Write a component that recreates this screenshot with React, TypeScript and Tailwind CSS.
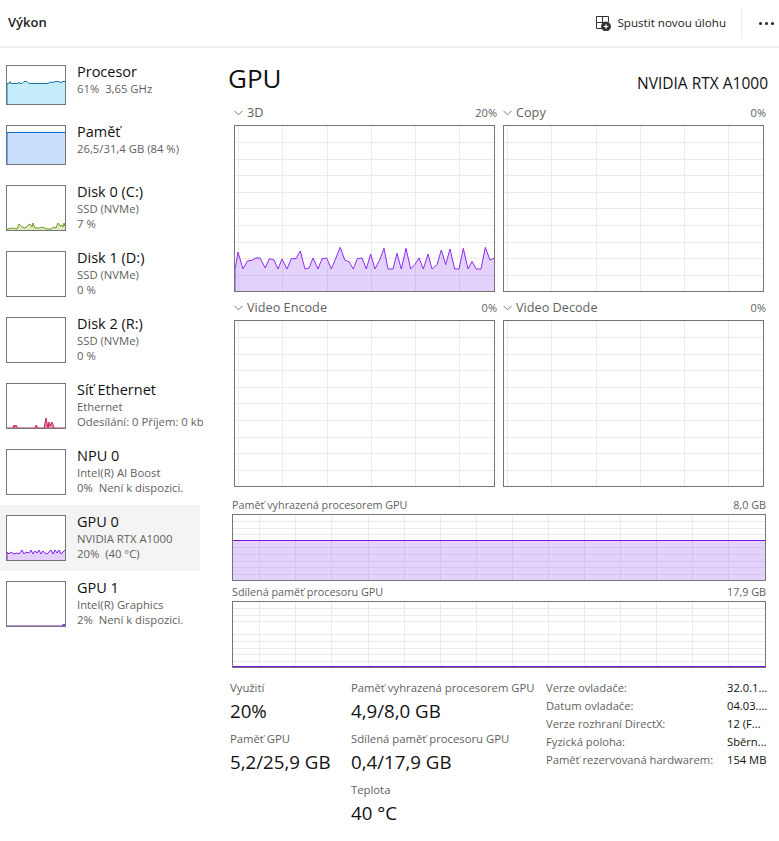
const font = { fontFamily: '"Open Sans", "Noto Sans", sans-serif' };

const line3d: [number, number][] = [
  [31, 525], [40, 472], [55, 523], [68, 499], [82, 497], [94, 490], [106, 490], [122, 520], [134, 492], [148, 496],
  [160, 523], [172, 493], [187, 523], [200, 492], [214, 492], [227, 469], [241, 523], [253, 520], [265, 490], [280, 523],
  [292, 492], [306, 490], [320, 523], [347, 458], [360, 496], [373, 501], [386, 523], [398, 492], [412, 490], [425, 523],
  [438, 478], [451, 523], [465, 495], [478, 461], [490, 523], [505, 523], [517, 476], [530, 523], [544, 461], [558, 523],
  [570, 510], [583, 490], [596, 523], [610, 478], [622, 523], [637, 510], [650, 466], [663, 510], [676, 463], [690, 523],
  [703, 523], [716, 461], [730, 523], [742, 500], [755, 523], [769, 523], [782, 458], [796, 496], [808, 491],
];
const points3d = line3d.map(([x, y]) => `${((x - 31) / 3).toFixed(1)},${((y - 94) / 3).toFixed(1)}`).join(" ");

function Grid({ w, h, xs, ys }: { w: number; h: number; xs: number[]; ys: number[] }) {
  return (
    <g stroke="#ebebeb" strokeWidth="1" shapeRendering="crispEdges">
      {xs.map((x) => <line key={"x" + x} x1={x + 0.5} x2={x + 0.5} y1="0" y2={h} />)}
      {ys.map((y) => <line key={"y" + y} x1="0" x2={w} y1={y + 0.5} y2={y + 0.5} />)}
    </g>
  );
}

const bigXs = [3, 47, 92, 136, 180, 224];
const bigYs = [16, 33, 49, 66, 82, 99, 116, 132, 149];

function BigChart({ title, value, data }: { title: string; value: string; data?: boolean }) {
  return (
    <div className="w-[261px]">
      <div className="flex h-[20px] items-center justify-between text-[12.7px] text-[#5f5f5f]">
        <div className="flex items-center">
          <svg width="9" height="6" viewBox="0 0 9 6" className="mr-[4px]" fill="none" stroke="#777" strokeWidth="1">
            <path d="M0.5 0.8 L4.5 4.8 L8.5 0.8" />
          </svg>
          <span>{title}</span>
        </div>
        <span className="relative left-[2px] text-[11px]">{value}</span>
      </div>
      <div className="mt-[2px] h-[167px] w-[261px] border border-[#757575] bg-white">
        <svg width="259" height="165" className="block">
          <Grid w={259} h={165} xs={bigXs} ys={bigYs} />
          {data && (
            <>
              <polygon points={`0,165 ${points3d} 260,165`} fill="#9a5cf5" fillOpacity="0.28" />
              <polyline points={`0,165 ${points3d}`} fill="none" stroke="#8f2bf0" strokeWidth="1" />
            </>
          )}
        </svg>
      </div>
    </div>
  );
}

const wideXs = [26, 62, 98, 135, 171, 207, 243, 279, 315, 351, 387, 423, 459, 495];
const wideYs = [6, 13, 19, 32, 39, 46, 52, 59];

function WideChart({ title, value, level }: { title: string; value: string; level: number }) {
  return (
    <div className="w-[534px]">
      <div className="flex h-[18px] items-center justify-between text-[10.8px] text-[#5f5f5f]">
        <span>{title}</span>
        <span>{value}</span>
      </div>
      <div className="h-[67px] w-[534px] border border-[#757575] bg-white">
        <svg width="532" height="65" className="block">
          <Grid w={532} h={65} xs={wideXs} ys={wideYs} />
          <rect x="0" y={level} width="532" height={65 - level} fill="#9a5cf5" fillOpacity="0.28" />
          <rect x="0" y={level} width="532" height="1" fill="#7a14e0" />
        </svg>
      </div>
    </div>
  );
}

type Thumb = { stroke: string; fill: string; points?: string };

function Thumbnail({ h, thumb }: { h: number; thumb?: Thumb }) {
  const inner = h - 2;
  return (
    <div className="w-[60px] shrink-0 border border-[#757575] bg-white" style={{ height: h }}>
      <svg width="58" height={inner} className="block">
        {thumb?.points && (
          <>
            <polygon points={`0,${inner} ${thumb.points} 58,${inner}`} fill={thumb.fill} />
            <polyline points={thumb.points} fill="none" stroke={thumb.stroke} strokeWidth="1" />
          </>
        )}
      </svg>
    </div>
  );
}

const items: { name: string; lines: string[]; h: number; thumb?: Thumb; active?: boolean }[] = [
  {
    name: "Procesor", lines: ["61%  3,65 GHz"], h: 40,
    thumb: {
      stroke: "#17799f", fill: "#c4ecfa",
      points: "0,38 0,17.5 2,17.5 3,15.5 4,17.5 11,17.5 12,16 13,17.5 15,17.5 17,15.5 20,15.5 22,17.5 41,17.5 43,16 46,16.5 48,15.5 52,15.5 54,17 55,15.5 58,15.5",
    },
  },
  {
    name: "Paměť", lines: ["26,5/31,4 GB (84 %)"], h: 40,
    thumb: { stroke: "#0f6ce0", fill: "#c9dffd", points: "0,38 0,6.5 58,6.5" },
  },
  {
    name: "Disk 0 (C:)", lines: ["SSD (NVMe)", "7 %"], h: 46,
    thumb: {
      stroke: "#6f9a1f", fill: "#dcebc3",
      points: "0,43 6,42 10,43 12,38 15,41 18,42 20,40 23,38 25,41 26,37 28,42 33,42 35,41 40,43 44,43 47,41 49,42 51,37 53,40 55,39 56,41 57,37 58,40",
    },
  },
  { name: "Disk 1 (D:)", lines: ["SSD (NVMe)", "0 %"], h: 46 },
  { name: "Disk 2 (R:)", lines: ["SSD (NVMe)", "0 %"], h: 46 },
  {
    name: "Síť Ethernet", lines: ["Ethernet", "Odesílání: 0 Příjem: 0 kb/s"], h: 46,
    thumb: {
      stroke: "#c6285e", fill: "#e08aa8",
      points: "0,44 6,44 7,41 8,43 9,41 10,43 11,44 28,44 29,41 31,44 37,44 39,34 41,44 42,38 43,42 45,38 47,44 58,44",
    },
  },
  { name: "NPU 0", lines: ["Intel(R) AI Boost", "0%  Není k dispozici."], h: 46 },
  {
    name: "GPU 0", lines: ["NVIDIA RTX A1000", "20%  (40 °C)"], h: 46, active: true,
    thumb: {
      stroke: "#7e22e8", fill: "#e3d0ff",
      points: "0,44 0,36 2,38 4,36 7,38 10,37 12,38 15,34 17,38 19,36 22,37 24,34 26,38 28,35 30,37 32,34 34,38 36,35 38,37 40,38 42,36 44,34 46,38 48,34 50,37 52,34 54,38 56,36 58,34",
    },
  },
  {
    name: "GPU 1", lines: ["Intel(R) Graphics", "2%  Není k dispozici."], h: 46,
    thumb: { stroke: "#7e22e8", fill: "#9a5cf5", points: "0,44 55,44 56,42.5 58,42.5" },
  },
];

function Stat({ label, value }: { label: string; value: string }) {
  return (
    <div className="h-[51px] whitespace-nowrap">
      <div className="h-[20px] text-[11.3px] leading-[20px] text-[#5f5f5f]">{label}</div>
      <div className="text-[18.7px] leading-[26px] text-[#111]">{value}</div>
    </div>
  );
}

const details = [
  ["Verze ovladače:", "32.0.1..."],
  ["Datum ovladače:", "04.03...."],
  ["Verze rozhraní DirectX:", "12 (F..."],
  ["Fyzická poloha:", "Sběrn..."],
  ["Paměť rezervovaná hardwarem:", "154 MB"],
];

export default function App() {
  return (
    <div style={font} className="h-[841px] w-[779px] overflow-hidden bg-white">
      <header className="flex h-[48px] items-center border-b-2 border-[#efefef] pl-[8px]">
        <div className="text-[13px] font-semibold text-[#222]">Výkon</div>
        <div className="ml-auto flex items-center">
          <svg width="16" height="16" viewBox="0 0 16 16" fill="none" stroke="#333" strokeWidth="1">
            <path d="M1.5 7.5 V1.5 H13.5 V7 M7.5 1.5 V13.5 M1.5 7.5 H10 M1.5 7.5 V13.5 H7.5" />
            <circle cx="11" cy="11.5" r="4.5" fill="#333" />
            <path d="M11 9.2 V13.8 M8.7 11.5 H13.3" stroke="#fff" strokeWidth="1.2" />
          </svg>
          <span className="ml-[7px] text-[11.6px] text-[#222]">Spustit novou úlohu</span>
          <div className="ml-[15px] h-[31px] w-px bg-[#ececec]" />
          <div className="ml-[17px] mr-[5px] flex gap-[3px]">
            <div className="h-[3px] w-[3px] rounded-full bg-[#222]" />
            <div className="h-[3px] w-[3px] rounded-full bg-[#222]" />
            <div className="h-[3px] w-[3px] rounded-full bg-[#222]" />
          </div>
        </div>
      </header>
      <div className="flex">
        <aside className="w-[204px] shrink-0 pt-[7px]">
          {items.map((item) => (
            <div key={item.name} className={"flex w-[200px] py-[10px] pl-[6px] " + (item.active ? "bg-[#f4f4f4]" : "")}>
              <Thumbnail h={item.h} thumb={item.thumb} />
              <div className="ml-[11px] mt-[-3px] w-[126px] shrink-0 whitespace-nowrap">
                <div className="text-[14.5px] leading-[19px] text-[#111]">{item.name}</div>
                {item.lines.map((l) => (
                  <div key={l} className="overflow-hidden whitespace-pre text-[11.3px] leading-[15px] text-[#5f5f5f]">{l}</div>
                ))}
              </div>
            </div>
          ))}
        </aside>
        <main className="w-[575px] pl-[24px]">
          <div className="flex h-[55px] items-end justify-between pr-[11px] pb-[8px]">
            <div className="text-[26px] leading-[34px] text-[#111]">GPU</div>
            <div className="mb-[2px] text-[15.5px] leading-[20px] text-[#111]">NVIDIA RTX A1000</div>
          </div>
          <div className="ml-[6px] grid w-[530px] grid-cols-[261px_261px] gap-x-[8px] gap-y-[6px]">
            <BigChart title="3D" value="20%" data />
            <BigChart title="Copy" value="0%" />
            <BigChart title="Video Encode" value="0%" />
            <BigChart title="Video Decode" value="0%" />
          </div>
          <div className="ml-[4px] mt-[9px] flex flex-col gap-[2px]">
            <WideChart title="Paměť vyhrazená procesorem GPU" value="8,0 GB" level={25} />
            <WideChart title="Sdílená paměť procesoru GPU" value="17,9 GB" level={64} />
          </div>
          <div className="ml-[2px] mt-[10px] flex">
            <div className="w-[121px]">
              <Stat label="Využití" value="20%" />
              <Stat label="Paměť GPU" value="5,2/25,9 GB" />
            </div>
            <div className="w-[195px]">
              <Stat label="Paměť vyhrazená procesorem GPU" value="4,9/8,0 GB" />
              <Stat label="Sdílená paměť procesoru GPU" value="0,4/17,9 GB" />
              <Stat label="Teplota" value="40 °C" />
            </div>
            <div className="w-[222px] pt-px">
              {details.map(([k, v]) => (
                <div key={k} className="flex h-[18px] items-center text-[11.2px]">
                  <div className="w-[181px] text-[#5f5f5f]">{k}</div>
                  <div className="text-[#111]">{v}</div>
                </div>
              ))}
            </div>
          </div>
        </main>
      </div>
    </div>
  );
}
